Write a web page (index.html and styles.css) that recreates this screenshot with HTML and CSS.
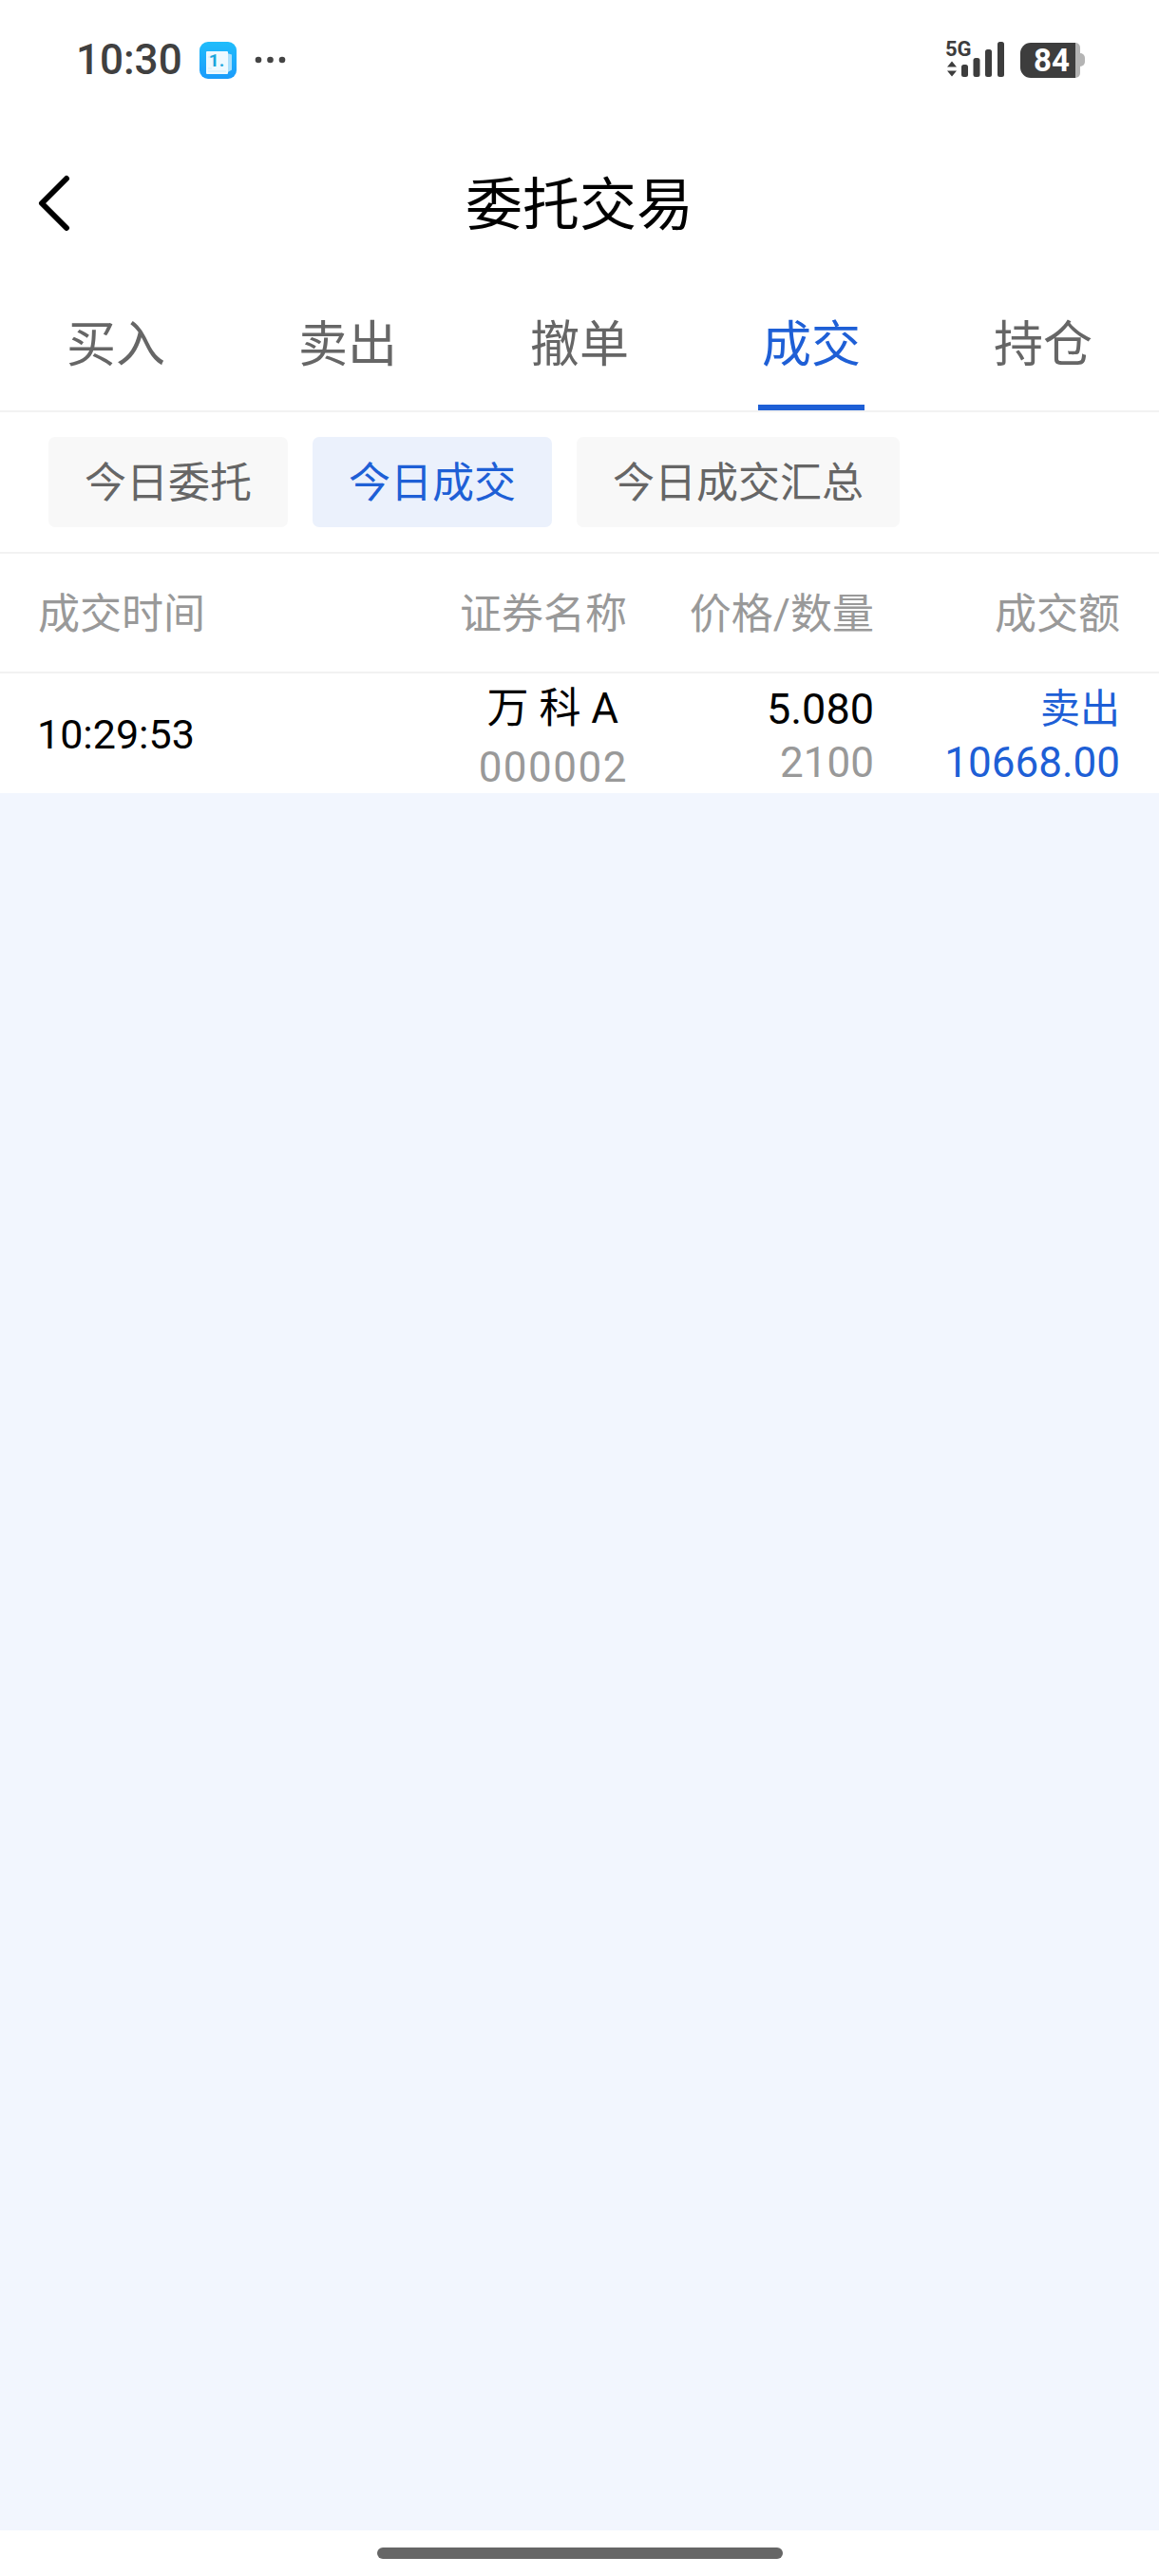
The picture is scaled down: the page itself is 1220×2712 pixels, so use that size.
FILE: index.html
```html
<!DOCTYPE html>
<html lang="zh-CN">
<head>
<meta charset="utf-8">
<title>委托交易</title>
<link rel="stylesheet" href="styles.css">
</head>
<body>
<div class="page">
  <header class="status">
    <div class="status-left">
      <span class="clock">10:30</span>
      <svg class="app-icon" viewBox="0 0 39 39" width="39" height="39" aria-hidden="true">
        <defs><linearGradient id="ag" x1="0" y1="0" x2="0" y2="1"><stop offset="0" stop-color="#20bdfb"/><stop offset="1" stop-color="#1a9bfb"/></linearGradient></defs>
        <rect width="39" height="39" rx="9" fill="url(#ag)"/>
        <path d="M29 12l5 1.500v16l-5 3z" fill="#a9dffb"/>
        <rect x="7" y="10" width="23" height="24" rx="1" fill="#eef9ff"/>
        <path d="M9 31h19M9 28h4M9 16h3" stroke="#cfeefc" stroke-width="1"/>
        <text x="18" y="26" text-anchor="middle" class="app-num">1.</text>
      </svg>
      <svg class="dots" viewBox="0 0 33 8" width="33" height="8" aria-hidden="true">
        <circle cx="4" cy="4" r="3.300" fill="#444"/><circle cx="16.500" cy="4" r="3.300" fill="#444"/><circle cx="29" cy="4" r="3.300" fill="#444"/>
      </svg>
    </div>
    <div class="status-right">
      <svg class="signal" viewBox="0 0 62 38" width="62" height="38" aria-hidden="true">
        <text x="-1" y="15" class="net">5G</text>
        <path d="M5.500 20.500l5 6h-10z M5.500 36.500l5-6h-10z" fill="#3d3d3d" transform="translate(0.500 0)"/>
        <rect x="16" y="24" width="7" height="13" rx="2.500" fill="#3d3d3d"/>
        <rect x="28.500" y="17" width="7" height="20" rx="2.500" fill="#3d3d3d"/>
        <rect x="41" y="8" width="7" height="29" rx="2.500" fill="#3d3d3d"/>
        <rect x="54" y="0" width="7" height="37" rx="2.500" fill="#3d3d3d"/>
      </svg>
      <div class="battery">
        <span class="battery-fill">84</span>
        <span class="battery-rest"></span>
        <span class="battery-nub"></span>
      </div>
    </div>
  </header>

  <nav class="navbar">
    <svg class="back" viewBox="0 0 36 62" width="36" height="62" aria-hidden="true">
      <path d="M32 5L6 31l26 26" fill="none" stroke="#000" stroke-width="6" stroke-linecap="round" stroke-linejoin="round"/>
    </svg>
    <h1 class="title">委托交易</h1>
  </nav>

  <div class="tabs">
    <div class="tab"><span class="tab-label">买入</span></div>
    <div class="tab"><span class="tab-label">卖出</span></div>
    <div class="tab"><span class="tab-label">撤单</span></div>
    <div class="tab tab-active"><span class="tab-label">成交</span></div>
    <div class="tab"><span class="tab-label">持仓</span></div>
  </div>

  <div class="chips">
    <div class="chip">今日委托</div>
    <div class="chip chip-active">今日成交</div>
    <div class="chip">今日成交汇总</div>
  </div>

  <div class="table-head grid">
    <div>成交时间</div>
    <div class="right">证券名称</div>
    <div class="right">价格/数量</div>
    <div class="right">成交额</div>
  </div>

  <div class="table-row grid">
    <div class="time">10:29:53</div>
    <div class="name-cell">
      <div class="name">万 科 A</div>
      <div class="code">000002</div>
    </div>
    <div class="right stack">
      <div class="black price">5.080</div>
      <div class="muted">2100</div>
    </div>
    <div class="right stack blue">
      <div class="side">卖出</div>
      <div>10668.00</div>
    </div>
  </div>

  <main class="empty"></main>

  <footer class="home-bar"><span class="home-pill"></span></footer>
</div>
</body>
</html>
```

FILE: styles.css
```css
* { box-sizing: border-box; margin: 0; padding: 0; }
html, body { background: #fff; }
body {
  width: 1220px;
  height: 2712px;
  overflow: hidden;
  font-family: Roboto, "Noto Sans CJK SC", sans-serif;
}
.page { display: flex; flex-direction: column; height: 2712px; }

.status {
  height: 126px;
  display: flex;
  justify-content: space-between;
  align-items: center;
  padding: 0 78px 0 80px;
}
.status-left, .status-right { display: flex; align-items: center; }
.clock { font-size: 44px; font-weight: 500; color: #404040; line-height: 1; width: 130px; }
.dots { margin-left: 19px; }
.app-num { font: 700 19px Roboto, sans-serif; fill: #1aa6dc; }
.signal { margin-right: 16px; overflow: visible; }
.net { font: 700 22px Roboto, sans-serif; fill: #3d3d3d; }
.battery { display: flex; align-items: center; }
.battery-fill {
  width: 58px;
  height: 37px;
  background: #3d3d3d;
  border-radius: 11px 0 0 11px;
  color: #fff;
  font-size: 33px;
  font-weight: 700;
  line-height: 37px;
  padding-left: 14px;
}
.battery-rest { width: 5px; height: 37px; background: #b4b4b4; border-radius: 0 9px 9px 0; }
.battery-nub { width: 5px; height: 14px; background: #b4b4b4; border-radius: 0 5px 5px 0; }

.navbar {
  height: 174px;
  display: flex;
  align-items: center;
  justify-content: center;
  position: relative;
  padding-top: 7px;
}
.back { position: absolute; left: 38px; top: 57px; }
.title { font-size: 60px; font-weight: 400; color: #000; line-height: 1; }

.tabs {
  display: grid;
  grid-template-columns: repeat(5, 1fr);
  border-bottom: 2px solid #f2f2f2;
  height: 134px;
}
.tab { display: flex; justify-content: center; color: #666; font-size: 52px; line-height: 52px; padding-top: 38px; }
.tab-label { display: block; height: 94px; padding: 0 4px 42px; }
.tab-active { color: #1e5fd6; }
.tab-active .tab-label { border-bottom: 6px solid #1e5fd6; }

.chips {
  display: flex;
  gap: 26px;
  padding: 26px 0 26px 51px;
  border-bottom: 2px solid #f2f2f2;
  height: 149px;
}
.chip {
  height: 95px;
  padding: 0 38px;
  background: #f8f8f8;
  border-radius: 7px;
  color: #666;
  font-size: 44px;
  line-height: 99px;
}
.chip-active { background: #ebf1fc; color: #1e5fd6; }

.grid {
  display: grid;
  grid-template-columns: 430px 190px 260px 1fr;
  padding: 0 41px 0 40px;
}
.right { text-align: right; }

.table-head {
  height: 126px;
  align-items: center;
  color: #999;
  font-size: 44px;
  line-height: 56px;
  border-bottom: 2px solid #f2f2f2;
  padding-top: 4px;
}

.table-row {
  height: 126px;
  align-items: center;
  font-size: 44px;
  line-height: 56px;
  background: #fff;
  padding-top: 4px;
}
.time { font-size: 43px; color: #000; margin-left: -1px; padding-bottom: 3px; }
.name-cell {
  align-self: start;
  justify-self: end;
  padding-top: 5px;
  display: flex;
  flex-direction: column;
  align-items: center;
}
.name { color: #000; }
.code { color: #999; margin-top: 6px; letter-spacing: 1.500px; margin-right: -1px; }
.black { color: #000; }
.price { font-size: 45px; }
.side { font-size: 42px; }
.muted { color: #999; }
.blue { color: #1e5fd6; }

.empty { flex: 1; background: #f2f6fe; }
.home-bar { height: 48px; background: #fff; padding-top: 18px; display: flex; justify-content: center; }
.home-pill { width: 427px; height: 12px; border-radius: 6px; background: #666; }
```
